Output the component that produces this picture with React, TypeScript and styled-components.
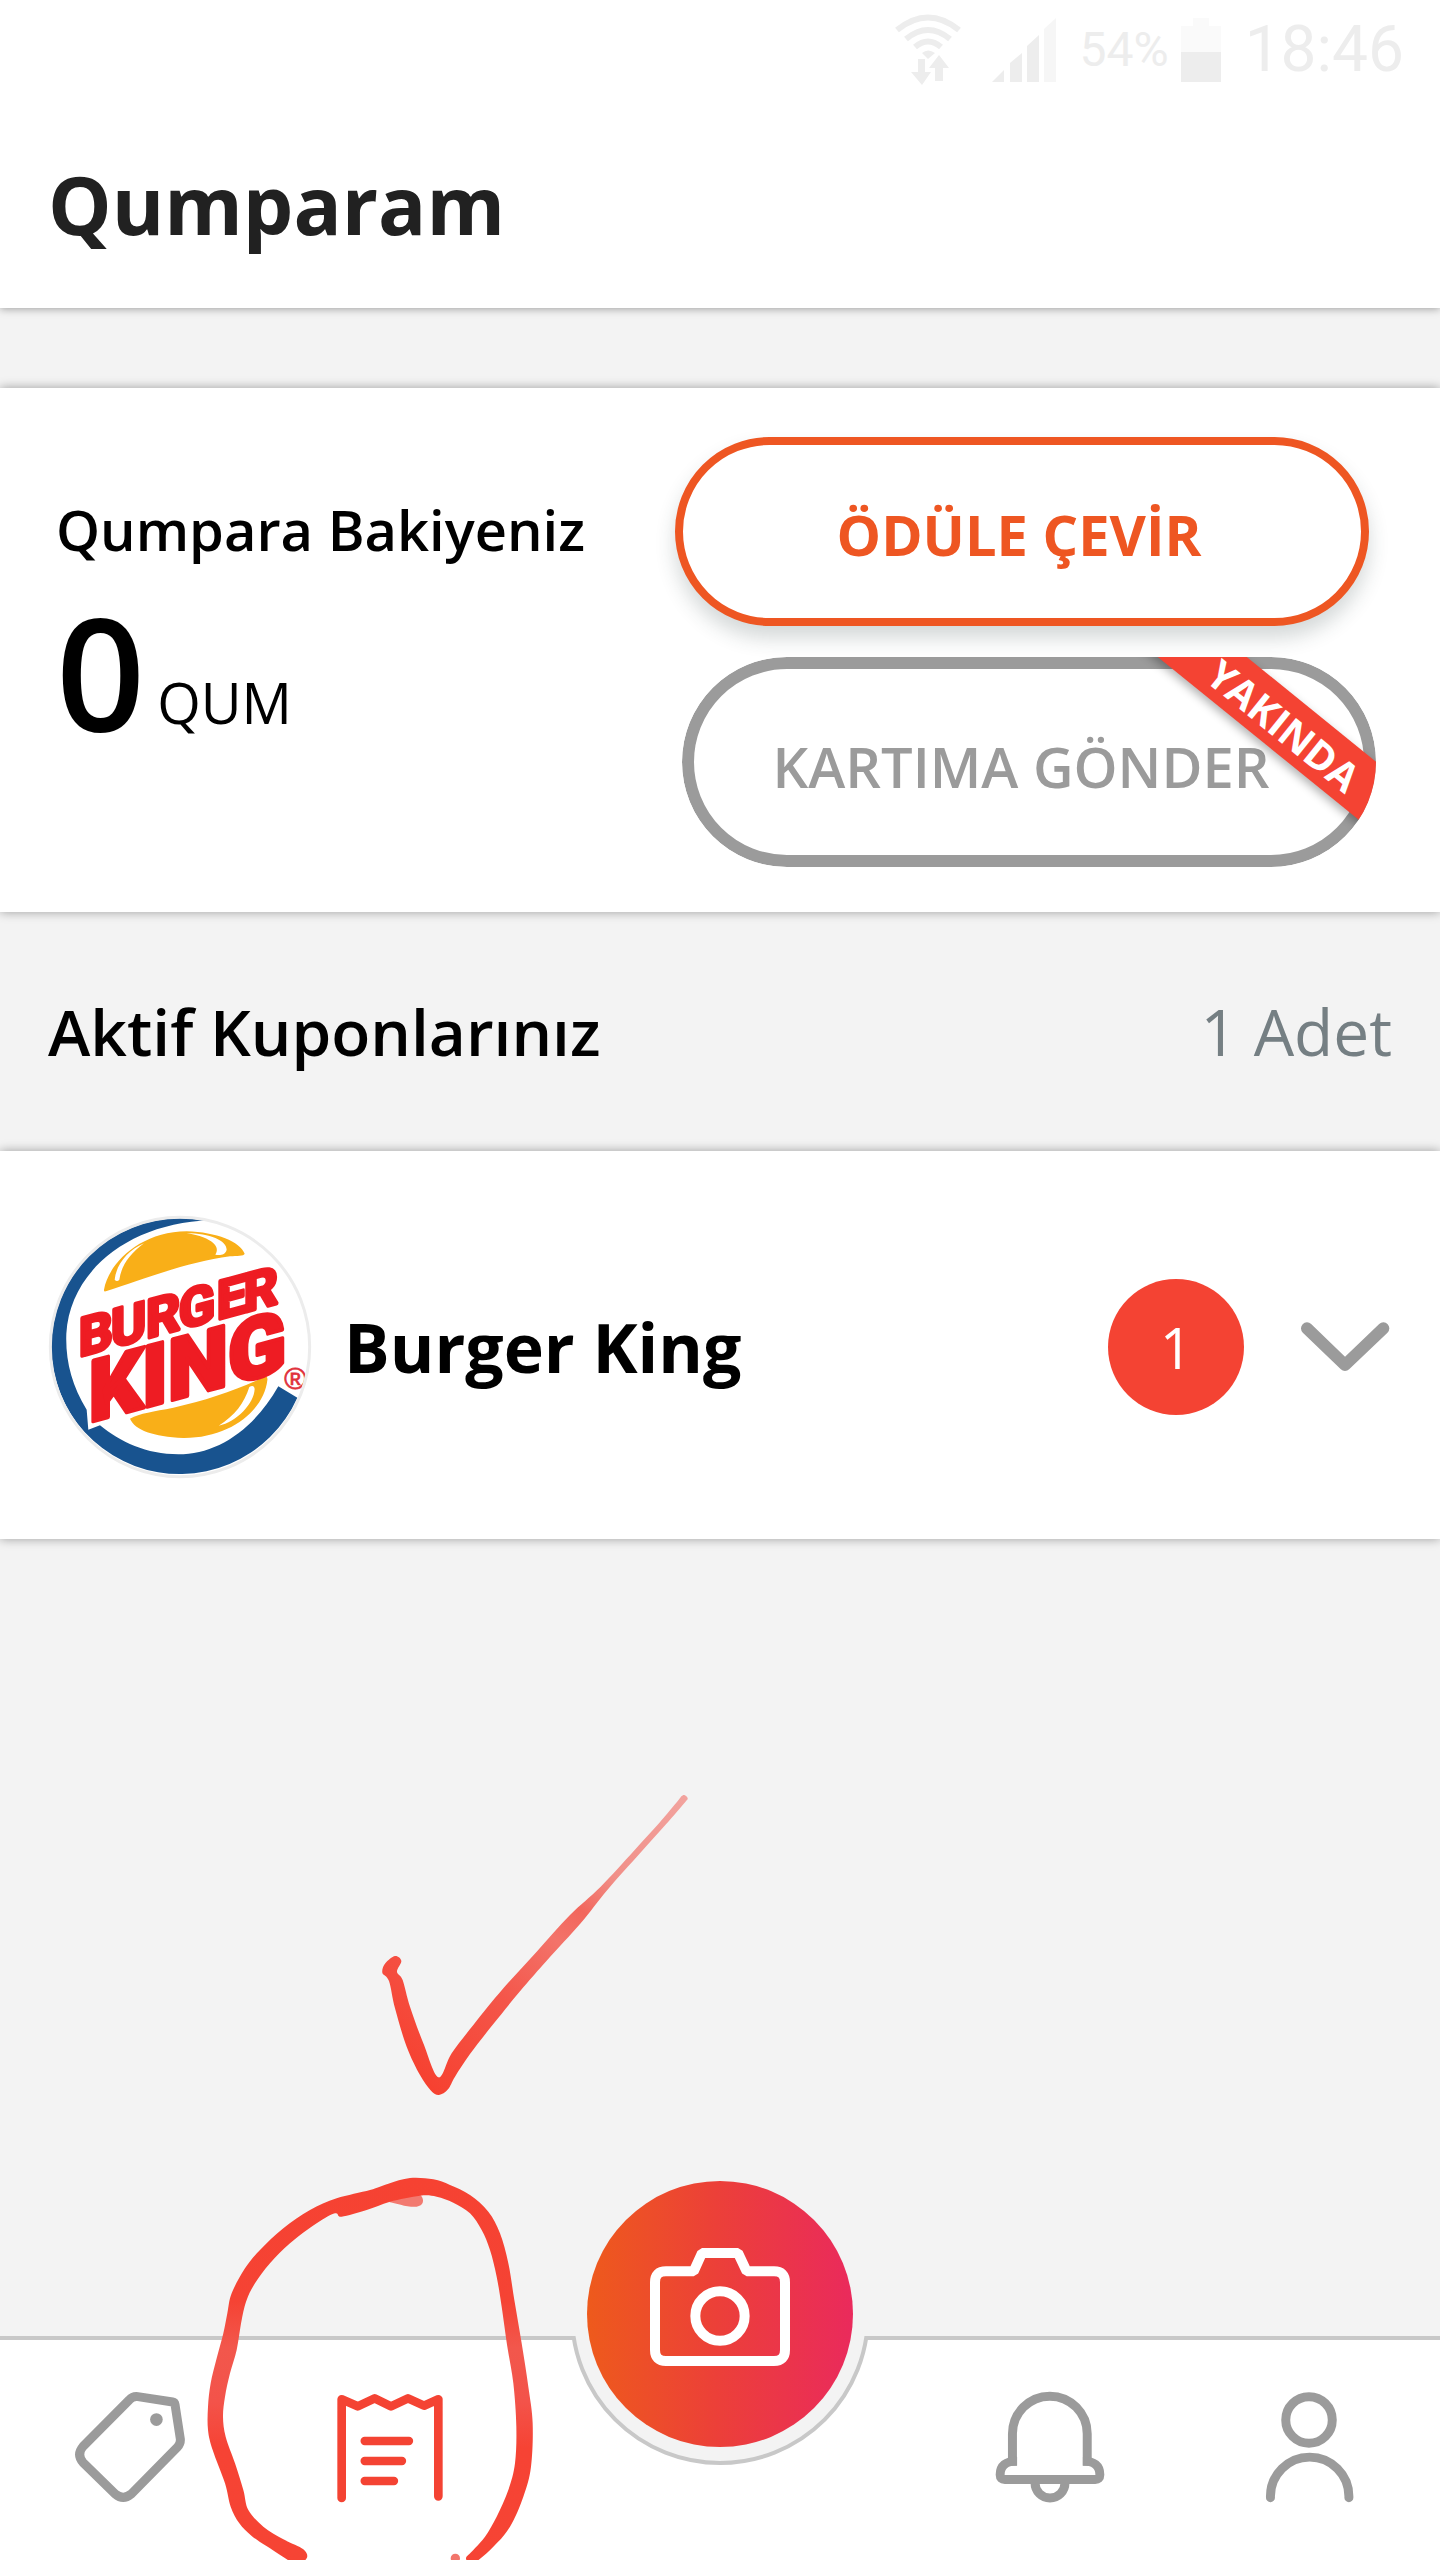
import React from "react";
import styled, { createGlobalStyle } from "styled-components";

const color = {
  page: "#f3f3f3",
  surface: "#ffffff",
  ink: "#000000",
  title: "#212121",
  muted: "#757f83",
  grey: "#9b9b9b",
  line: "#c8c8c8",
  orange: "#ee5622",
  red: "#f44333",
  status: "#ededed",
};

const GlobalStyle = createGlobalStyle`
  *, *::before, *::after { box-sizing: border-box; }
  body {
    margin: 0;
    background: ${color.page};
    font-family: "Open Sans", "Noto Sans", sans-serif;
    color: ${color.ink};
  }
  h1, h2, h3, p { margin: 0; }
  button { font-family: inherit; cursor: pointer; }
  svg { display: block; }
`;

const Page = styled.div`
  position: relative;
  display: flex;
  flex-direction: column;
  min-height: 100vh;
  overflow: hidden;
`;

const Top = styled.header`
  background: ${color.surface};
  box-shadow: 0 1px 8px rgba(0, 0, 0, 0.35);
`;

const StatusBar = styled.div`
  display: flex;
  justify-content: flex-end;
  align-items: center;
  height: 100px;
  padding-right: 36px;
  font-family: Roboto, sans-serif;
  color: ${color.status};

  svg + svg { margin-left: 30px; }
  span + svg { margin-left: 12px; }
`;

const StatusText = styled.span<{ $size: number }>`
  font-size: ${(p) => p.$size}px;
  line-height: 76px;
  font-weight: 400;
  margin-left: 24px;
`;

const TitleBar = styled.div`
  display: flex;
  align-items: center;
  height: 208px;
  padding: 0 48px;
`;

const Title = styled.h1`
  font-size: 80px;
  line-height: 100px;
  font-weight: 700;
  color: ${color.title};
`;

const Content = styled.main`
  flex: 1;
  padding-top: 80px;
`;

const Card = styled.section`
  background: ${color.surface};
  box-shadow: 0 0 10px rgba(0, 0, 0, 0.36);
`;

const BalanceCard = styled(Card)`
  display: grid;
  grid-template-columns: 619fr 701fr;
  padding: 49px 64px 45px 56px;
`;

const Balance = styled.div`
  padding-top: 54px;
`;

const BalanceLabel = styled.h2`
  font-size: 56px;
  line-height: 76px;
  font-weight: 600;
  white-space: nowrap;
`;

const Amount = styled.p`
  display: flex;
  align-items: flex-end;
  gap: 12px;
  margin-top: 24px;
`;

const AmountValue = styled.strong`
  font-size: 156px;
  line-height: 160px;
  font-weight: 600;
`;

const AmountUnit = styled.span`
  font-size: 56px;
  line-height: 76px;
  padding-bottom: 11px;
`;

const Actions = styled.div`
  display: flex;
  flex-direction: column;
  gap: 31px;
`;

const Pill = styled.button`
  width: 99%;
  border-radius: 105px;
  background: ${color.surface};
  font-size: 56px;
  line-height: 76px;
  white-space: nowrap;
`;

const PrimaryPill = styled(Pill)`
  height: 189px;
  padding: 4px 6px 0 0;
  border: 8px solid ${color.orange};
  color: ${color.orange};
  font-weight: 700;
  box-shadow: 0 12px 20px rgba(40, 60, 60, 0.2);
`;

const PillFrame = styled.div`
  position: relative;
  align-self: flex-end;
  width: 99%;
  border-radius: 105px;
  overflow: hidden;
`;

const DisabledPill = styled(Pill)`
  display: block;
  width: 100%;
  height: 210px;
  padding: 8px 16px 0 0;
  border: 12px solid ${color.grey};
  color: ${color.grey};
  font-weight: 600;
`;

const Ribbon = styled.span`
  position: absolute;
  top: 39px;
  right: -69px;
  width: 320px;
  height: 56px;
  background: ${color.red};
  color: #fff;
  font-size: 40px;
  line-height: 60px;
  font-weight: 700;
  text-align: center;
  transform: rotate(39deg);
  box-shadow: 0 4px 10px rgba(0, 0, 0, 0.3);
  pointer-events: none;
`;

const SectionHead = styled.div`
  display: flex;
  align-items: center;
  justify-content: space-between;
  height: 239px;
  padding: 0 48px;
`;

const SectionTitle = styled.h2`
  font-size: 64px;
  line-height: 88px;
  font-weight: 600;
`;

const SectionCount = styled.p`
  font-size: 64px;
  line-height: 88px;
  color: ${color.muted};
`;

const CouponRow = styled.button`
  display: flex;
  align-items: center;
  width: 100%;
  height: 388px;
  padding: 4px 50px 0 48px;
  border: 0;
  background: transparent;
  color: ${color.ink};
  text-align: left;
`;

const CouponName = styled.span`
  flex: 1;
  margin-left: 32px;
  font-size: 68px;
  line-height: 88px;
  font-weight: 700;
`;

const Badge = styled.span`
  display: flex;
  align-items: center;
  justify-content: center;
  width: 136px;
  height: 136px;
  margin-right: 56px;
  border-radius: 50%;
  background: ${color.red};
  color: #fff;
  font-size: 56px;
  line-height: 76px;
`;

const Nav = styled.nav`
  position: relative;
  display: grid;
  grid-template-columns: 13fr 13fr 20fr 13fr 13fr;
  height: 224px;
  border-top: 4px solid ${color.line};
  background: ${color.surface};
`;

const NavLink = styled.a<{ $active?: boolean }>`
  display: flex;
  justify-content: center;
  align-items: flex-start;
  padding-top: 50px;
  color: ${(p) => (p.$active ? color.red : color.grey)};
`;

const NavCenter = styled.div`
  position: relative;
`;

const Notch = styled.div`
  position: absolute;
  left: 50%;
  top: -175px;
  width: 300px;
  height: 300px;
  margin-left: -150px;
  border: 4px solid ${color.line};
  border-radius: 50%;
  background: ${color.page};
  clip-path: inset(171px 0 0 0);
`;

const CameraButton = styled.button`
  position: absolute;
  left: 50%;
  top: -159px;
  display: flex;
  align-items: center;
  justify-content: center;
  width: 266px;
  height: 266px;
  margin-left: -133px;
  padding: 0 0 14px;
  border: 0;
  border-radius: 50%;
  background: linear-gradient(90deg, #ee5a1c 0%, #ec4038 48%, #ea2a5c 100%);
  color: #fff;
`;

const Sketch = styled.svg<{ $left: number; $bottom: number }>`
  position: absolute;
  left: ${(p) => p.$left}px;
  bottom: ${(p) => p.$bottom}px;
  pointer-events: none;
`;

type Point = [number, number];

/* Closed Catmull-Rom curve through the given points. */
function smooth(points: Point[]): string {
  const n = points.length;
  let d = `M${points[0][0]} ${points[0][1]}`;
  for (let i = 0; i < n; i++) {
    const a = points[(i - 1 + n) % n];
    const b = points[i];
    const c = points[(i + 1) % n];
    const e = points[(i + 2) % n];
    d += `C${b[0] + (c[0] - a[0]) / 6} ${b[1] + (c[1] - a[1]) / 6} ${c[0] - (e[0] - b[0]) / 6} ${c[1] - (e[1] - b[1]) / 6} ${c[0]} ${c[1]}`;
  }
  return d + "Z";
}

const checkOutline: Point[] = [
  [235, 922], [275, 850], [340, 765], [430, 655], [530, 545], [630, 435], [722, 350], [822, 242], [897, 160],
  [955, 91], [964, 79], [973, 75], [983, 85], [974, 98], [918, 163], [840, 250], [742, 360], [662, 460], [560, 572],
  [490, 652], [400, 762], [330, 852], [285, 920], [264, 958], [237, 975], [213, 962], [180, 915], [140, 830],
  [105, 715], [87, 633], [67, 608], [76, 580], [105, 558], [124, 573], [111, 605], [128, 630], [150, 710], [190, 820],
];

const loopOutline: Point[] = [
  [345, 1240], [270, 1195], [215, 1158], [178, 1120], [152, 1070], [135, 1000], [98, 900], [84, 840], [84, 770],
  [92, 700], [110, 625], [130, 550], [142, 490], [155, 430], [195, 355], [240, 300], [310, 235], [390, 180],
  [470, 145], [570, 120], [625, 101], [690, 84], [760, 88], [810, 105], [870, 135], [925, 185], [960, 250],
  [985, 340], [1003, 450], [1025, 580], [1045, 710], [1058, 820], [1053, 950], [1030, 1040], [990, 1130],
  [940, 1190], [880, 1240], [858, 1225], [880, 1200], [915, 1160], [950, 1100], [985, 1020], [1005, 940],
  [1009, 830], [1000, 700], [982, 590], [965, 470], [950, 380], [930, 300], [905, 240], [870, 190], [820, 158],
  [770, 140], [720, 137], [630, 155], [560, 180], [485, 200], [465, 190], [410, 220], [330, 280], [270, 340],
  [225, 400], [200, 450], [185, 510], [170, 600], [150, 670], [135, 740], [129, 800], [137, 860], [165, 940],
  [190, 1020], [205, 1080], [250, 1130], [310, 1168], [370, 1198], [380, 1225],
];

const CheckSketch = () => (
  <Sketch $left={360} $bottom={440} width="360" height="350" viewBox="0 0 1080 1050" aria-hidden="true">
    <defs>
      <linearGradient id="checkInk" gradientUnits="userSpaceOnUse" x1="235" y1="975" x2="975" y2="75">
        <stop offset="0" stopColor="#f64130" />
        <stop offset="0.3" stopColor="#f4564a" />
        <stop offset="0.5" stopColor="#f3736a" />
        <stop offset="0.6" stopColor="#f2665c" />
        <stop offset="0.72" stopColor="#f18f88" />
        <stop offset="1" stopColor="#f2a39e" />
      </linearGradient>
    </defs>
    <path d={smooth(checkOutline)} fill="url(#checkInk)" />
  </Sketch>
);

const LoopSketch = () => (
  <Sketch $left={180} $bottom={0} width="400" height="410" viewBox="0 0 1200 1230" aria-hidden="true">
    <defs>
      <linearGradient id="loopInk" x1="0" y1="0" x2="0" y2="1">
        <stop offset="0" stopColor="#f64232" />
        <stop offset="0.32" stopColor="#f54334" />
        <stop offset="0.44" stopColor="#f2574c" />
        <stop offset="0.58" stopColor="#f3534a" />
        <stop offset="0.7" stopColor="#f64334" />
        <stop offset="1" stopColor="#f64434" />
      </linearGradient>
    </defs>
    <path d="M625 155C670 138 700 130 722 136C735 150 730 168 710 170C680 172 650 160 625 155Z" fill="#f27a70" />
    <path d={smooth(loopOutline)} fill="url(#loopInk)" />
    <circle cx="826" cy="1225" r="14" fill="#f2766c" />
  </Sketch>
);

const WifiIcon = () => (
  <svg width="68" height="72" viewBox="893 12 68 72" fill="none" stroke="currentColor" strokeWidth="6" aria-hidden="true">
    <path d="M896 28Q927 3 958 28" />
    <path d="M905 37Q927 19 949 37" />
    <path d="M914 45Q927 34 940 45" />
    <path d="M921 51Q927 46 934 51L927 57Z" fill="currentColor" stroke="none" />
    <path d="M917 57H924V70H930L921 83L910 70H917Z" fill="currentColor" stroke="none" />
    <path d="M938 53L948 66H942V79H934V66H928Z" fill="currentColor" stroke="none" />
  </svg>
);

const SignalIcon = () => (
  <svg width="64" height="64" viewBox="991 16 64 64" fill="currentColor" aria-hidden="true">
    <path d="M991 80L1003 68V80Z" />
    <path d="M1009 80V61L1021 51V80Z" />
    <path d="M1026 80V44L1038 33V80Z" />
    <path d="M1043 80V27L1055 16V80Z" opacity="0.5" />
  </svg>
);

const BatteryIcon = () => (
  <svg width="40" height="64" viewBox="0 0 40 64" fill="currentColor" aria-hidden="true">
    <path d="M12 0H28V8H40V34H0V8H12Z" opacity="0.25" />
    <path d="M0 34H40V64H0Z" />
  </svg>
);

const ChevronIcon = () => (
  <svg width="90" height="52" viewBox="720 303 270 156" fill="none" stroke={color.grey} strokeWidth="36" strokeLinecap="round" strokeLinejoin="round" aria-hidden="true">
    <path d="M741 325L855 435L970 325" />
  </svg>
);

const TagIcon = () => (
  <svg width="113" height="113" viewBox="220 210 340 340" fill="none" stroke="currentColor" strokeWidth="27" strokeLinejoin="round" aria-hidden="true">
    <path d="M386 240Q397 228 412 230L517 246Q523 247 524 254L540 358Q541 371 532 381L392 523Q368 543 344 523L247 428Q227 404 247 380Z" />
    <circle cx="468" cy="299" r="19" fill="currentColor" stroke="none" />
  </svg>
);

const ReceiptIcon = () => (
  <svg width="108" height="113" viewBox="467 723 324 339" fill="none" stroke="currentColor" strokeWidth="26" strokeLinecap="round" strokeLinejoin="round" aria-hidden="true">
    <path d="M484 1047V751L532 772L583 748L632 772L683 748L731 770L774 751V1042" />
    <path d="M553 876H686M553 936H665M553 996H641" strokeWidth="25" />
  </svg>
);

const CameraIcon = () => (
  <svg width="140" height="118" viewBox="330 294 420 354" fill="none" stroke="currentColor" strokeWidth="30" aria-hidden="true">
    <path d="M378 364H461L486 309H594L620 364H702Q735 364 735 397V600Q735 633 702 633H378Q345 633 345 600V397Q345 364 378 364Z" strokeLinejoin="bevel" />
    <circle cx="540" cy="498" r="74" />
  </svg>
);

const BellIcon = () => (
  <svg width="112" height="113" viewBox="160 210 336 340" fill="none" stroke="currentColor" strokeWidth="27" aria-hidden="true">
    <path d="M215 438V342A112 113 0 0 1 440 342V438" />
    <path d="M229 424Q178 424 178 465Q178 479 192 479H464Q478 479 478 465Q478 424 427 424" />
    <path d="M283 485V490A45 45 0 0 0 373 490V485" />
  </svg>
);

const UserIcon = () => (
  <svg width="92" height="113" viewBox="975 210 276 340" fill="none" stroke="currentColor" strokeWidth="27" strokeLinecap="round" aria-hidden="true">
    <circle cx="1110" cy="300" r="70" />
    <path d="M994 534V530A118 118 0 0 1 1230 530V534" />
  </svg>
);

const BurgerKingLogo = () => (
  <svg width="264" height="264" viewBox="24 44 792 792" role="img" aria-label="Burger King">
    <defs>
      <clipPath id="disc">
        <circle cx="420" cy="440" r="386" />
      </clipPath>
    </defs>
    <circle cx="420" cy="440" r="390" fill="#fff" />
    <g clipPath="url(#disc)">
      <path
        d="M510 60A386 386 0 1 0 772 592L715 558C640 690 530 762 415 762C320 762 240 725 180 675L145 688L140 628C95 555 76 480 79 400C90 210 270 68 510 60Z"
        fill="#18538f"
      />
      <path d="M192 268C205 190 300 94 440 93C530 95 600 125 614 160C612 168 590 166 570 168C440 185 300 240 200 272Q191 276 192 268Z" fill="#f9af18" />
      <path d="M224 238C228 195 262 150 312 129C270 160 244 195 238 238Q231 246 224 238Z" fill="#fff" />
      <path d="M440 98C510 100 560 120 560 148C556 164 540 166 526 163C542 140 520 112 440 98Z" fill="#fff" />
      <path d="M270 655C300 638 340 634 400 622C500 600 600 566 676 528Q684 528 682 540C672 630 570 714 430 713C340 708 285 690 270 655Z" fill="#f9af18" />
      <path d="M628 560Q642 552 644 566C642 610 590 665 536 676C585 645 612 610 628 560Z" fill="#fff" />
      <g fill="#ee1c23" stroke="#ee1c23" strokeLinejoin="round" fontFamily="Roboto, sans-serif">
        <text transform="skewY(-15)" fontSize="160" fontWeight="700" strokeWidth="11" x="116 213 318 416 530 611" y="500">BURGER</text>
        <text transform="skewY(-15)" fontSize="256" fontWeight="900" strokeWidth="12" x="146 306 384 564" y="706">KING</text>
      </g>
      <text x="733" y="567" fontSize="90" fontFamily="Liberation Sans, sans-serif" fill="#e0303a" stroke="#e0303a" strokeWidth="2">®</text>
    </g>
    <circle cx="420" cy="440" r="389" fill="none" stroke="#ececec" strokeWidth="9" />
  </svg>
);

export default function App() {
  return (
    <Page>
      <GlobalStyle />
      <Top>
        <StatusBar>
          <WifiIcon />
          <SignalIcon />
          <StatusText $size={48}>54%</StatusText>
          <BatteryIcon />
          <StatusText $size={64}>18:46</StatusText>
        </StatusBar>
        <TitleBar>
          <Title>Qumparam</Title>
        </TitleBar>
      </Top>

      <Content>
        <BalanceCard>
          <Balance>
            <BalanceLabel>Qumpara Bakiyeniz</BalanceLabel>
            <Amount>
              <AmountValue>0</AmountValue>
              <AmountUnit>QUM</AmountUnit>
            </Amount>
          </Balance>
          <Actions>
            <PrimaryPill type="button">ÖDÜLE ÇEVİR</PrimaryPill>
            <PillFrame>
              <DisabledPill type="button" disabled>KARTIMA GÖNDER</DisabledPill>
              <Ribbon>YAKINDA</Ribbon>
            </PillFrame>
          </Actions>
        </BalanceCard>

        <SectionHead>
          <SectionTitle>Aktif Kuponlarınız</SectionTitle>
          <SectionCount>1 Adet</SectionCount>
        </SectionHead>

        <Card>
          <CouponRow type="button" aria-expanded="false">
            <BurgerKingLogo />
            <CouponName>Burger King</CouponName>
            <Badge>1</Badge>
            <ChevronIcon />
          </CouponRow>
        </Card>
      </Content>

      <Nav aria-label="Menü">
        <NavLink href="#firsatlar" aria-label="Fırsatlar"><TagIcon /></NavLink>
        <NavLink href="#qumparam" aria-label="Qumparam" aria-current="page" $active><ReceiptIcon /></NavLink>
        <NavCenter>
          <Notch />
          <CameraButton type="button" aria-label="Kamera"><CameraIcon /></CameraButton>
        </NavCenter>
        <NavLink href="#bildirimler" aria-label="Bildirimler"><BellIcon /></NavLink>
        <NavLink href="#profil" aria-label="Profil"><UserIcon /></NavLink>
      </Nav>

      <CheckSketch />
      <LoopSketch />
    </Page>
  );
}
